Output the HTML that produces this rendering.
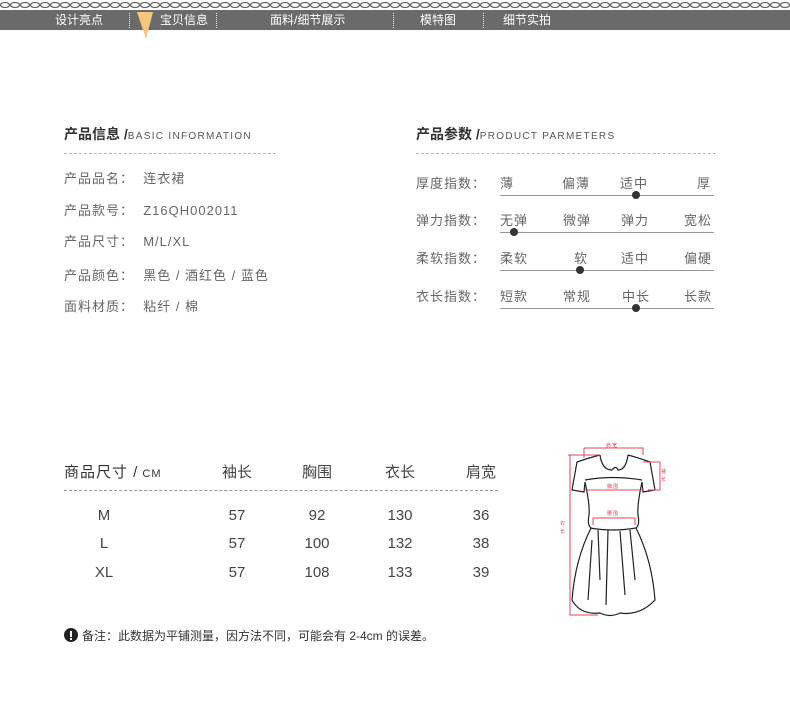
<!DOCTYPE html>
<html><head><meta charset="utf-8"><style>
*{margin:0;padding:0}
body{width:790px;height:712px;background:#fff;position:relative;overflow:hidden;font-family:"Liberation Sans","Noto Sans CJK SC",sans-serif;color:#555}
.a{position:absolute;white-space:nowrap}
.nav{position:absolute;left:0;top:10px;width:790px;height:20px;background:#6a6a6a}
.nav span{position:absolute;top:3px;color:#fff;font-size:12px;line-height:14px}
.sep{position:absolute;top:3px;height:15px;border-left:1px dotted #eee}
.t{font-size:14px;font-weight:bold;color:#333}
.t small{font-size:10px;font-weight:normal;color:#555;letter-spacing:1.3px}
.dash{position:absolute;height:0;border-top:1px dashed #bbb}
.r{font-size:13px;color:#666;letter-spacing:1px}
.ln{position:absolute;left:500px;width:214px;height:1px;background:#999}
.dot{position:absolute;width:8px;height:8px;border-radius:50%;background:#333}
.c{position:absolute;font-size:15px;color:#444;text-align:center;width:60px}
</style></head><body>
<svg class="a" style="left:0;top:0" width="790" height="10"><defs><pattern id="p" width="10" height="10" patternUnits="userSpaceOnUse"><ellipse cx="5" cy="5" rx="4.5" ry="2.5" fill="none" stroke="#666" stroke-width="1.3"/></pattern></defs><rect width="790" height="10" fill="url(#p)"/></svg>
<div class="nav">
<span style="left:55px">设计亮点</span>
<div class="sep" style="left:129px"></div>
<span style="left:160px">宝贝信息</span>
<div class="sep" style="left:216px"></div>
<span style="left:270px">面料/细节展示</span>
<div class="sep" style="left:393px"></div>
<span style="left:420px">模特图</span>
<div class="sep" style="left:483px"></div>
<span style="left:503px">细节实拍</span>
</div>
<svg class="a" style="left:137px;top:12px" width="18" height="28"><polygon points="0,0 16,0 9,27" fill="#f5c77d"/></svg>

<div class="a t" style="left:64px;top:124px">产品信息 /<small>BASIC INFORMATION</small></div>
<div class="dash" style="left:64px;top:153px;width:212px"></div>
<div class="a r" style="left:64px;top:168px">产品品名：&nbsp;&nbsp;连衣裙</div>
<div class="a r" style="left:64px;top:200px">产品款号：&nbsp;&nbsp;Z16QH002011</div>
<div class="a r" style="left:64px;top:231px">产品尺寸：&nbsp;&nbsp;M/L/XL</div>
<div class="a r" style="left:64px;top:265px">产品颜色：&nbsp;&nbsp;黑色 / 酒红色 / 蓝色</div>
<div class="a r" style="left:64px;top:296px">面料材质：&nbsp;&nbsp;粘纤 / 棉</div>

<div class="a t" style="left:416px;top:124px">产品参数 /<small>PRODUCT PARMETERS</small></div>
<div class="dash" style="left:416px;top:153px;width:300px"></div>

<div class="a r" style="left:416px;top:173px">厚度指数：</div>
<div class="a r" style="left:500px;top:173px">薄</div><div class="a r" style="left:562px;top:173px">偏薄</div><div class="a r" style="left:620px;top:173px">适中</div><div class="a r" style="left:697px;top:173px">厚</div>
<div class="ln" style="top:195px"></div><div class="dot" style="left:632px;top:191px"></div>

<div class="a r" style="left:416px;top:210px">弹力指数：</div>
<div class="a r" style="left:500px;top:210px">无弹</div><div class="a r" style="left:563px;top:210px">微弹</div><div class="a r" style="left:621px;top:210px">弹力</div><div class="a r" style="left:684px;top:210px">宽松</div>
<div class="ln" style="top:232px"></div><div class="dot" style="left:510px;top:228px"></div>

<div class="a r" style="left:416px;top:248px">柔软指数：</div>
<div class="a r" style="left:500px;top:248px">柔软</div><div class="a r" style="left:574px;top:248px">软</div><div class="a r" style="left:621px;top:248px">适中</div><div class="a r" style="left:684px;top:248px">偏硬</div>
<div class="ln" style="top:270px"></div><div class="dot" style="left:576px;top:266px"></div>

<div class="a r" style="left:416px;top:286px">衣长指数：</div>
<div class="a r" style="left:500px;top:286px">短款</div><div class="a r" style="left:563px;top:286px">常规</div><div class="a r" style="left:622px;top:286px">中长</div><div class="a r" style="left:684px;top:286px">长款</div>
<div class="ln" style="top:308px"></div><div class="dot" style="left:632px;top:304px"></div>

<div class="a" style="left:64px;top:461px;font-size:15px;color:#333;letter-spacing:1px">商品尺寸 /<span style="font-size:11px"> CM</span></div>
<div class="c" style="left:207px;top:461px">袖长</div>
<div class="c" style="left:287px;top:461px">胸围</div>
<div class="c" style="left:370px;top:461px">衣长</div>
<div class="c" style="left:451px;top:461px">肩宽</div>
<div class="dash" style="left:64px;top:490px;width:434px;border-color:#999"></div>
<div class="c" style="left:74px;top:507px">M</div><div class="c" style="left:207px;top:507px">57</div><div class="c" style="left:287px;top:507px">92</div><div class="c" style="left:370px;top:507px">130</div><div class="c" style="left:451px;top:507px">36</div>
<div class="c" style="left:74px;top:535px">L</div><div class="c" style="left:207px;top:535px">57</div><div class="c" style="left:287px;top:535px">100</div><div class="c" style="left:370px;top:535px">132</div><div class="c" style="left:451px;top:535px">38</div>
<div class="c" style="left:74px;top:564px">XL</div><div class="c" style="left:207px;top:564px">57</div><div class="c" style="left:287px;top:564px">108</div><div class="c" style="left:370px;top:564px">133</div><div class="c" style="left:451px;top:564px">39</div>

<svg class="a" style="left:64px;top:628px" width="14" height="14"><circle cx="7" cy="7" r="7" fill="#222"/><rect x="6" y="3" width="2" height="6" fill="#fff"/><rect x="6" y="10" width="2" height="2" fill="#fff"/></svg>
<div class="a" style="left:82px;top:627px;font-size:12px;color:#333">备注：此数据为平铺测量，因方法不同，可能会有 2-4cm 的误差。</div>

<svg class="a" style="left:540px;top:430px" width="150" height="190" fill="none" stroke="#222" stroke-width="1.2">
<path d="M60 25 Q48 28 37 32 L32 60 L44 62 L45 52 Q50 75 49 85 Q47 95 51 98 Q35 130 32 170 Q40 185 60 183 Q70 188 80 183 Q100 186 115 170 Q112 130 96 98 Q100 95 98 85 Q97 75 102 52 L103 62 L115 60 L110 32 Q99 28 88 25"/>
<path d="M60 25 Q62 40 72 40 Q76 35 78 40 Q86 40 88 25"/>
<path d="M45 50 Q73 45 102 50"/>
<path d="M50 98 Q73 102 96 98"/>
<path d="M58 100 L60 150 M68 100 L66 175 M80 101 L85 165 M90 100 L95 150 M52 110 L48 170"/>
<g stroke="#e0455c" stroke-width="1"><path d="M30 25 L30 185 L58 185 M28 25 L60 25 M44 18 L103 18 L103 25 M44 18 L44 28 M103 32 L120 32 L120 60 L108 60 M45 60 L103 60 M53 88 L95 88 L95 95 M53 88 L53 95"/></g>
<g fill="#e0455c" stroke="none" font-size="5" font-family="Noto Sans CJK SC,sans-serif"><text x="66" y="17">肩 宽</text><text x="67" y="58">胸 围</text><text x="67" y="85">腰 围</text><text x="121" y="43">袖</text><text x="121" y="51">长</text><text x="20" y="95">衣</text><text x="20" y="103">长</text></g>
</svg>
</body></html>
